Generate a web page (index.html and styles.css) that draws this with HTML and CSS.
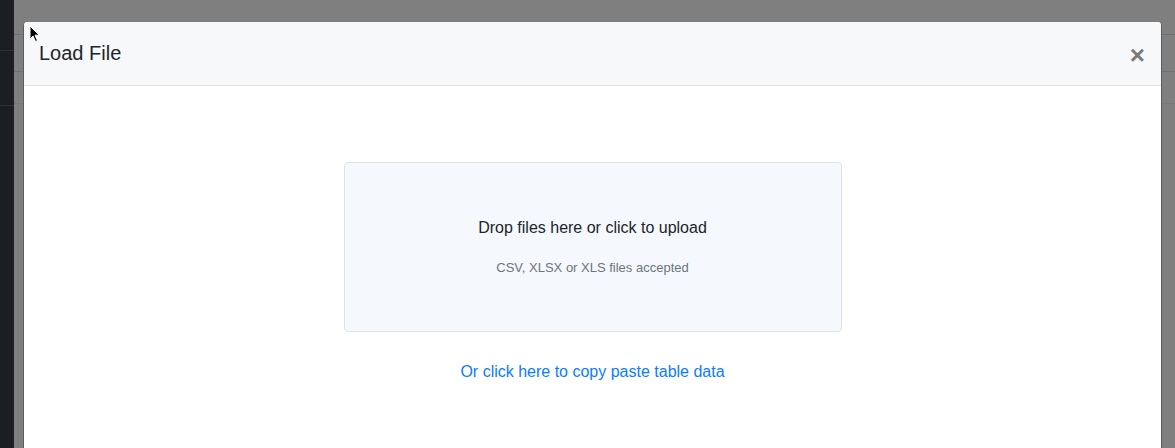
FILE: index.html
```html
<!DOCTYPE html>
<html lang="en">
<head>
    <meta charset="UTF-8">
    <meta name="viewport" content="width=device-width, initial-scale=1.0">
    <title>Load File</title>
    <link rel="stylesheet" href="styles.css">
</head>
<body>
    <!-- Page behind the backdrop -->
    <div class="page">
        <div class="sidebar">
            <div class="side-row side-top"></div>
            <div class="side-row"></div>
        </div>
        <div class="main">
            <div class="main-row row-a"></div>
            <div class="main-row row-b"></div>
            <div class="main-row row-c"></div>
        </div>
    </div>

    <!-- Load File modal -->
    <div class="modal">
        <div class="modal-header">
            <h5 class="modal-title">Load File</h5>
            <button class="close" type="button">&times;</button>
        </div>
        <div class="modal-body">
            <div class="dropzone">
                <p class="drop-title">Drop files here or click to upload</p>
                <p class="drop-hint">CSV, XLSX or XLS files accepted</p>
            </div>
            <a class="paste-link" href="#">Or click here to copy paste table data</a>
        </div>
    </div>

    <svg class="cursor" width="12" height="18" viewBox="0 0 12 18">
        <path d="M1 1 L1 14 L4 11 L6.5 16.5 L8.5 15.6 L6 10.2 L10.2 10.2 Z" fill="#000" stroke="#fff" stroke-width="1"/>
    </svg>
</body>
</html>
```

FILE: styles.css
```css
body {
    margin: 0;
    height: 448px;
    overflow: hidden;
    font-family: "Liberation Sans", Arial, sans-serif;
    background-color: #7f7f7f;
}
.page {
    display: flex;
    height: 100%;
}
.sidebar {
    width: 14px;
    background-color: #1b1e22;
}
.side-row {
    height: 54px;
    border-bottom: 1px solid #2c3035;
}
.side-top {
    height: 50px;
}
.main {
    flex: 1;
}
.main-row {
    border-bottom: 1px solid #6f6f6f;
}
.row-a {
    height: 34px;
}
.row-b {
    height: 36px;
}
.row-c {
    height: 31px;
    border-bottom-color: #777;
}
.modal {
    position: absolute;
    top: 22px;
    left: 23px;
    width: 1139px;
    bottom: -10px;
    background-color: #fff;
    border-radius: 4px;
    border-left: 1px solid #5c5c5c;
    border-right: 1px solid #5c5c5c;
    box-sizing: border-box;
    overflow: hidden;
}
.modal-header {
    display: flex;
    align-items: center;
    height: 64px;
    padding: 0 16px 0 15px;
    box-sizing: border-box;
    background-color: #f7f8fa;
    border-bottom: 1px solid #dee2e6;
}
.modal-title {
    margin: 0;
    font-size: 20px;
    font-weight: 400;
    color: #212529;
}
.close {
    margin-left: auto;
    margin-top: 4px;
    padding: 0;
    border: none;
    background: none;
    font-family: "Liberation Sans", Arial, sans-serif;
    font-size: 26px;
    font-weight: 700;
    color: #7a7a7a;
    cursor: pointer;
}
.modal-body {
    display: flex;
    flex-direction: column;
    align-items: center;
    padding-top: 76px;
}
.dropzone {
    width: 498px;
    height: 170px;
    box-sizing: border-box;
    border: 1px solid #dfe3e8;
    border-radius: 4px;
    background-color: #f5f8fc;
    text-align: center;
    padding-top: 56px;
}
.drop-title {
    margin: 0;
    font-size: 16px;
    color: #212529;
}
.drop-hint {
    margin: 23px 0 0;
    font-size: 13px;
    color: #6c757d;
}
.paste-link {
    margin-top: 31px;
    font-size: 16px;
    color: #0a7cff;
    text-decoration: none;
}
.cursor {
    position: absolute;
    top: 25px;
    left: 29px;
}
```
